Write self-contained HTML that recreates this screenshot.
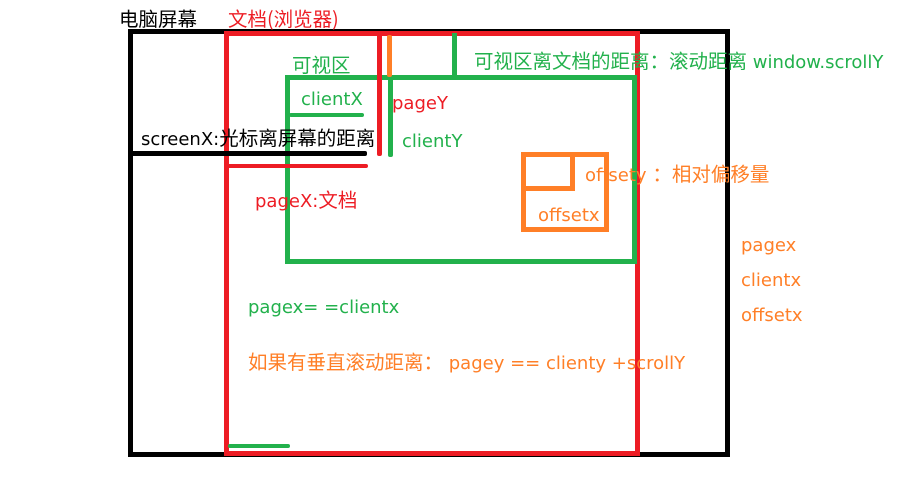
<!DOCTYPE html>
<html><head><meta charset="utf-8"><style>
body{margin:0;width:908px;height:497px;background:#fff;position:relative;overflow:hidden;font-family:"DejaVu Sans","Noto Sans CJK SC",sans-serif;font-size:18px}
div{position:absolute}
.t{white-space:nowrap;line-height:20px}
.c{font-size:19.5px;font-family:"Noto Sans CJK SC",sans-serif}
.r{color:#ed1c24}.g{color:#22b14c}.o{color:#ff7f27}.k{color:#000}
</style></head><body>
<div style="left:128px;top:29px;width:592px;height:418px;border:5px solid #000"></div>
<div style="left:224px;top:31px;width:406px;height:415px;border:5px solid #ed1c24"></div>
<div style="left:285px;top:75px;width:342px;height:179px;border:5px solid #22b14c"></div>
<div style="left:377px;top:32px;width:5px;height:124px;background:#ed1c24;border-radius:2px"></div>
<div style="left:387px;top:35px;width:5px;height:42px;background:#ff7f27;border-radius:2px"></div>
<div style="left:452px;top:33px;width:5px;height:44px;background:#22b14c"></div>
<div style="left:388px;top:77px;width:5px;height:80px;background:#22b14c;border-radius:2px"></div>
<div style="left:289px;top:113px;width:75px;height:4px;background:#22b14c;border-radius:2px"></div>
<div style="left:130px;top:151px;width:237px;height:5px;background:#000;border-radius:2px"></div>
<div style="left:226px;top:164px;width:142px;height:4px;background:#ed1c24;border-radius:2px"></div>
<div style="left:228px;top:444px;width:62px;height:4px;background:#22b14c;border-radius:2px"></div>
<div style="left:521px;top:152px;width:78px;height:70px;border:5px solid #ff7f27"></div>
<div style="left:521px;top:152px;width:44px;height:29px;border:5px solid #ff7f27"></div>
<div class="t k" style="left:119px;top:8px"><span class="c">电脑屏幕</span></div>
<div class="t r" style="left:228px;top:8px"><span class="c">文档(浏览器)</span></div>
<div class="t g" style="left:292px;top:54px"><span class="c">可视区</span></div>
<div class="t g" style="left:474px;top:50px"><span class="c">可视区离文档的距离：滚动距离</span> window.scrollY</div>
<div class="t g" style="left:301px;top:90px">clientX</div>
<div class="t r" style="left:392px;top:94px">pageY</div>
<div class="t k" style="left:141px;top:127px">screenX:<span class="c">光标离屏幕的距离</span></div>
<div class="t g" style="left:402px;top:132px">clientY</div>
<div class="t o" style="left:585px;top:163px">offsety <span class="c">：相对偏移量</span></div>
<div class="t r" style="left:255px;top:189px">pageX:<span class="c">文档</span></div>
<div class="t o" style="left:538px;top:206px">offsetx</div>
<div class="t o" style="left:741px;top:236px">pagex</div>
<div class="t o" style="left:741px;top:271px">clientx</div>
<div class="t o" style="left:741px;top:306px">offsetx</div>
<div class="t g" style="left:248px;top:298px">pagex= =clientx</div>
<div class="t o" style="left:248px;top:351px"><span class="c">如果有垂直滚动距离：</span> pagey == clienty +scrollY</div>
</body></html>
